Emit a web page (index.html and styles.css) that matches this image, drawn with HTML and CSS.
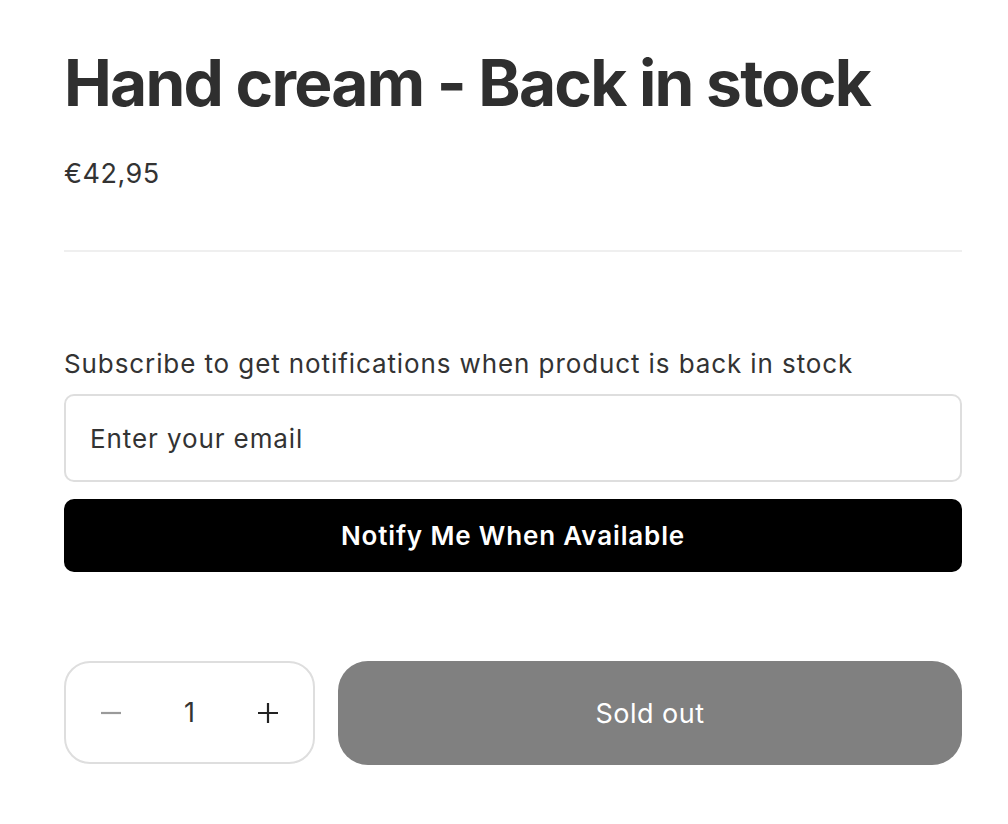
FILE: index.html
```html
<!DOCTYPE html>
<html>
<head>
<meta charset="utf-8">
<link rel="stylesheet" href="styles.css">
</head>
<body>
<main class="product">
  <h1 class="title">Hand cream - Back in stock</h1>
  <div class="price">€42,95</div>
  <hr class="divider">
  <section class="notify">
    <p class="notify-label">Subscribe to get notifications when product is back in stock</p>
    <div class="email-field">Enter your email</div>
    <button class="notify-btn">Notify Me When Available</button>
  </section>
  <div class="buy-row">
    <div class="qty">
      <span class="qty-btn minus">
        <svg width="22" height="22" viewBox="0 0 22 22"><path d="M1 11h20" stroke="#9a9a9a" stroke-width="2.2"/></svg>
      </span>
      <span class="qty-val">1</span>
      <span class="qty-btn plus">
        <svg width="22" height="22" viewBox="0 0 22 22"><path d="M1 11h20M11 1v20" stroke="#222" stroke-width="2.2"/></svg>
      </span>
    </div>
    <button class="sold-out">Sold out</button>
  </div>
</main>
</body>
</html>
```
FILE: styles.css
```css
* { box-sizing: border-box; }
html, body { margin: 0; padding: 0; background: #fff; }
body { font-family: Inter, "Noto Sans", sans-serif; color: #2f2f2f; }
.product { width: 898px; margin-left: 64px; padding-top: 48px; }
.title { margin: 0; font-size: 64px; font-weight: 700; line-height: 70px; letter-spacing: -1.75px; color: #2f2f2f; }
.price { margin-top: 39px; font-size: 27px; line-height: 34px; letter-spacing: 0.5px; color: #333; }
.divider { margin: 59px 0 0; border: 0; height: 2px; background: #efefef; }
.notify { margin-top: 95px; }
.notify-label { margin: 0 0 13px; font-size: 26px; line-height: 34px; letter-spacing: 0.9px; color: #333; }
.email-field { height: 88px; border: 2px solid #dedede; border-radius: 10px; padding-left: 24px; display: flex; align-items: center; font-size: 26px; letter-spacing: 0.9px; color: #333; }
.notify-btn { margin-top: 17px; width: 100%; height: 73px; border: 0; border-radius: 10px; background: #000; color: #fff; font-family: inherit; font-size: 26px; font-weight: 600; letter-spacing: 0.85px; display: block; }
.buy-row { margin-top: 89px; display: flex; gap: 23px; }
.qty { width: 251px; height: 103px; border: 2px solid #dedede; border-radius: 26px; display: flex; align-items: center; justify-content: space-between; padding: 0 34px; }
.qty-btn { display: flex; align-items: center; }
.qty-val { font-size: 27px; color: #333; }
.sold-out { flex: 1; height: 104px; border: 0; border-radius: 30px; background: #808080; color: #fff; font-family: inherit; font-size: 27px; font-weight: 400; letter-spacing: 0.5px; }
```
